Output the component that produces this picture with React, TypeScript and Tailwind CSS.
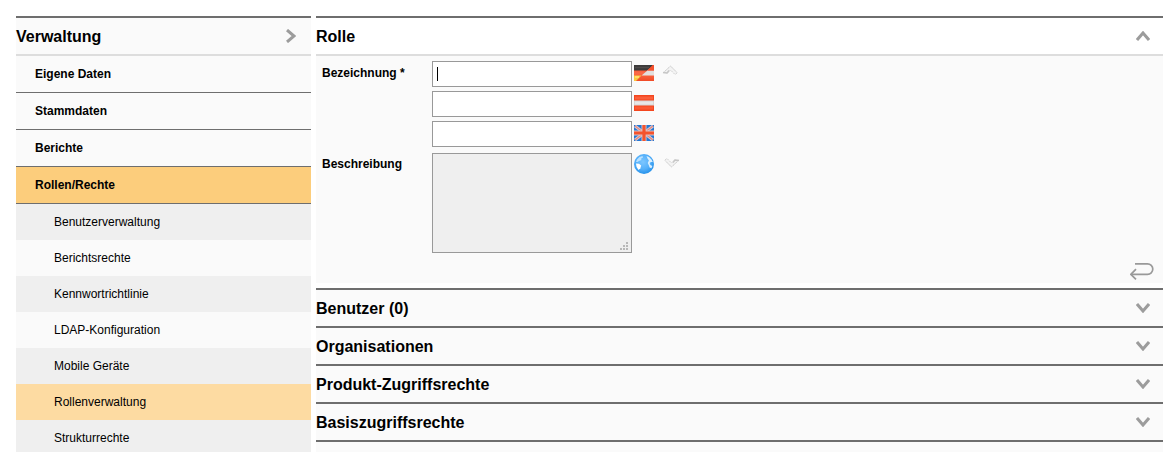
import * as React from "react";
import { cx } from "class-variance-authority";

const menu = ["Eigene Daten", "Stammdaten", "Berichte", "Rollen/Rechte"];

const subMenu = [
  "Benutzerverwaltung",
  "Berichtsrechte",
  "Kennwortrichtlinie",
  "LDAP-Konfiguration",
  "Mobile Geräte",
  "Rollenverwaltung",
  "Strukturrechte",
];

const sections = ["Benutzer (0)", "Organisationen", "Produkt-Zugriffsrechte", "Basiszugriffsrechte"];

function Chevron({ className }: { className?: string }) {
  return (
    <svg viewBox="0 0 14 10" className={cx("h-[10px] w-[14px]", className)} fill="none" aria-hidden="true">
      <path d="M1 1 7 8 13 1" stroke="#9c9c9c" strokeWidth="3" />
    </svg>
  );
}

function FlagGermanAustrian() {
  return (
    <svg viewBox="0 0 20 16" className="h-4 w-5" aria-hidden="true">
      <defs>
        <linearGradient id="deRed" x1="0" y1="0" x2="0" y2="1">
          <stop offset="0" stopColor="#e8401f" />
          <stop offset="0.5" stopColor="#fb6a48" />
          <stop offset="1" stopColor="#f04a26" />
        </linearGradient>
      </defs>
      <rect width="20" height="16" fill="url(#deRed)" />
      <path d="M0 0h19L13 5.5H0z" fill="#3b3a3a" />
      <path d="M1 2.5h14" stroke="#4e4a49" strokeWidth="1.5" />
      <path d="M20 5.5v5H7.5L13.5 5.5z" fill="#e3dfde" />
      <path d="M20 0v5.5h-6.5L19 0z" fill="#f4512d" />
      <path d="M0 10.5h7.5L2 16H0z" fill="#fbc93c" />
      <path d="M1 12h4" stroke="#ffe27a" strokeWidth="1.5" />
    </svg>
  );
}

function FlagAustria() {
  return (
    <svg viewBox="0 0 20 16" className="h-4 w-5" aria-hidden="true">
      <rect width="20" height="16" fill="#f3461f" />
      <rect x="1" y="1.5" width="18" height="3" fill="#fb5f3b" />
      <rect x="1" y="11.5" width="18" height="3" fill="#fb5833" />
      <rect y="5.5" width="20" height="5" fill="#d6d5d5" />
      <rect x="1" y="6.5" width="18" height="3" fill="#e8e7e7" />
    </svg>
  );
}

function FlagBritain() {
  return (
    <svg viewBox="0 0 20 16" className="h-4 w-5" aria-hidden="true">
      <rect width="20" height="16" fill="#2377d3" />
      <path d="M1 1 19 15M19 1 1 15" stroke="#d5c9d6" strokeWidth="3" />
      <path d="M1 1 19 15M19 1 1 15" stroke="#e98a7c" strokeWidth="1.2" />
      <path d="M10 0v16M0 8h20" stroke="#dfc3c4" strokeWidth="5" />
      <path d="M10 0v16M0 8h20" stroke="#f4532d" strokeWidth="3.2" />
    </svg>
  );
}

function Globe() {
  return (
    <svg viewBox="0 0 20 20" className="size-5" aria-hidden="true">
      <defs>
        <radialGradient id="sea" cx="0.45" cy="0.4" r="0.6">
          <stop offset="0" stopColor="#7cc6ff" />
          <stop offset="0.6" stopColor="#55b0fa" />
          <stop offset="1" stopColor="#2792ea" />
        </radialGradient>
      </defs>
      <circle cx="10" cy="10" r="10" fill="url(#sea)" />
      <path d="M3 5.5 5.5 3l3-1 .5 1.5-2 1.3.5 1.2L5 7 3.5 8 2 8z" fill="#b9e1ff" />
      <path d="m2 9.5 3 .3 2.2 1.7-.8 2.8L4.5 16 2.6 13z" fill="#fff" />
      <path d="m12.5 2 2.5 1 2.5 2.5L18.8 8l-1.8-.1-1.4 1.1.8 2 2 1-1 2.3-1.8-.8-.9-2.5-1-2 1.2-2.4L13.5 4.5z" fill="#d9efff" />
    </svg>
  );
}

function StepArrow({ className }: { className?: string }) {
  return (
    <svg viewBox="0 0 16 11" className={cx("h-[11px] w-4", className)} fill="none" aria-hidden="true">
      <path d="M1 8 8.5 1 15 7.5 13 9.5 8.5 5 4.5 9z" fill="#f3f3f3" />
      <path d="M1 8 8.5 1 15 7.5" stroke="#c2c2c2" strokeDasharray="2 1" />
      <path d="M15 8 13 9.5 8.5 5 4.5 9" stroke="#d2d2d2" strokeDasharray="2 1" />
      <path d="M1 7.5 5 8 7 5.5" stroke="#c6c6c6" strokeWidth="1.4" />
    </svg>
  );
}

const languages = [
  { name: "Deutsch", Flag: FlagGermanAustrian },
  { name: "Österreich", Flag: FlagAustria },
  { name: "English", Flag: FlagBritain },
];

function Sidebar() {
  return (
    <nav className="w-[295px] shrink-0 border-t-2 border-[#6e6e6e] bg-[#fafafa]">
      <div className="flex h-[38px] items-center justify-between border-b-2 border-[#dddddd] pr-3">
        <h2 className="pt-0.5 text-base font-bold">Verwaltung</h2>
        <button type="button" aria-label="Menü einklappen" className="flex w-4 justify-center">
          <Chevron className="-rotate-90" />
        </button>
      </div>
      <ul>
        {menu.map((item) => (
          <li key={item}>
            <a
              href="#"
              className={cx(
                "flex h-[37px] items-center border-b border-[#6e6e6e] pl-[19px] font-bold",
                item === "Rollen/Rechte" && "bg-[#fccd7c]"
              )}
            >
              {item}
            </a>
          </li>
        ))}
      </ul>
      <ul>
        {subMenu.map((item) => (
          <li key={item} className="odd:bg-[#efefef]">
            <a
              href="#"
              className={cx("flex h-9 items-center pl-[38px]", item === "Rollenverwaltung" && "bg-[#fddba2]")}
            >
              {item}
            </a>
          </li>
        ))}
      </ul>
    </nav>
  );
}

function RoleForm() {
  return (
    <form className="bg-[#fafafa] pt-[5px] pb-[3px] pl-1.5">
      <div className="flex items-start">
        <label htmlFor="name-0" className="w-[110px] pt-1 font-bold">
          Bezeichnung *
        </label>
        <div className="flex flex-col gap-1">
          {languages.map(({ name, Flag }, index) => (
            <div key={name} className="relative flex items-start gap-0.5">
              <input
                id={`name-${index}`}
                aria-label={index > 0 ? `Bezeichnung ${name}` : undefined}
                type="text"
                className="h-[26px] w-[200px] border border-[#999999] bg-white px-1 caret-transparent outline-none"
              />
              {index === 0 && <span className="absolute top-1.5 left-[5px] h-3.5 w-px bg-black" />}
              <span className="pt-1">
                <Flag />
              </span>
            </div>
          ))}
        </div>
        <button type="button" aria-label="Nach oben" className="mt-1 ml-2">
          <StepArrow />
        </button>
      </div>
      <div className="mt-1.5 flex items-start">
        <label htmlFor="description" className="w-[110px] pt-[3px] font-bold">
          Beschreibung
        </label>
        <div className="relative">
          <textarea
            id="description"
            className="block h-[100px] w-[200px] resize-none border border-[#999999] bg-[#efefef] px-1 outline-none"
          />
          <svg viewBox="0 0 8 8" className="absolute right-1 bottom-[3px] size-2" fill="#b8b8b8" aria-hidden="true">
            <path d="M6 0h2v2H6zM3 3h2v2H3zM6 3h2v2H6zM0 6h2v2H0zM3 6h2v2H3zM6 6h2v2H6z" />
          </svg>
        </div>
        <span className="ml-0.5 pt-px">
          <Globe />
        </span>
        <button type="button" aria-label="Nach unten" className="mt-1 ml-2.5">
          <StepArrow className="rotate-180" />
        </button>
      </div>
      <div className="mt-[9px] flex justify-end pr-[9px]">
        <button type="button" aria-label="Zurück">
          <svg viewBox="0 0 24 18" className="h-[18px] w-6" fill="none" stroke="#999999" strokeWidth="1.7" aria-hidden="true">
            <path d="M5 1.8h12.5a5.2 5.2 0 0 1 0 10.6H1" />
            <path d="M6 7.2 0.9 12.4l5.1 5" />
          </svg>
        </button>
      </div>
    </form>
  );
}

function SectionHeader({ title, open }: { title: string; open?: boolean }) {
  return (
    <h2 className={cx("border-t-2 border-[#6e6e6e]", !open && "bg-[#fafafa]")}>
      <button
        type="button"
        aria-expanded={!!open}
        className="flex h-9 w-full items-center justify-between pr-[13px] text-base font-bold"
      >
        <span className="pt-0.5">{title}</span>
        <Chevron className={cx(open && "rotate-180")} />
      </button>
    </h2>
  );
}

export default function App() {
  return (
    <div className="flex h-screen gap-[5px] overflow-hidden bg-white pt-4 pr-1 pl-4 font-['Liberation_Sans',Arial,sans-serif] text-xs text-black">
      <Sidebar />
      <main className="flex min-w-0 flex-1 flex-col">
        <section className="mb-[5px]">
          <SectionHeader title="Rolle" open />
          <div className="border-t-2 border-[#dddddd]">
            <RoleForm />
          </div>
        </section>
        {sections.map((title) => (
          <SectionHeader key={title} title={title} />
        ))}
        <div className="flex-1 border-t-2 border-[#6e6e6e] bg-[#fafafa]" />
      </main>
    </div>
  );
}
